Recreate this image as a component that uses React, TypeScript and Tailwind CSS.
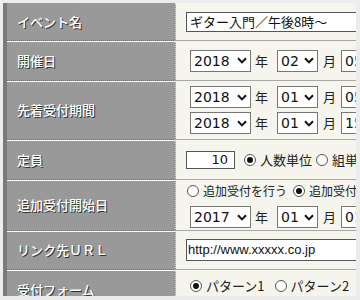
import React from 'react';

const jp = { fontFamily: '"Noto Sans CJK JP", "Noto Sans", sans-serif' };
const num = { fontFamily: '"DejaVu Sans", "Noto Sans CJK JP", sans-serif' };

const Chevron: React.FC = () => (
  <svg width="10" height="7" viewBox="0 0 10 7" className="ml-auto mr-[3px] shrink-0">
    <path d="M1 1.2 L5 5.4 L9 1.2" fill="none" stroke="#111" strokeWidth="2" />
  </svg>
);

const Select: React.FC<{ value: string; w: string }> = ({ value, w }) => (
  <div
    className={`flex h-[22px] ${w} shrink-0 items-center border border-[#767676] bg-white pl-[3px] text-[14px] leading-none text-[#111]`}
    style={num}
  >
    <span>{value}</span>
    <Chevron />
  </div>
);

const DateRow: React.FC<{ y: string; m: string; d: string }> = ({ y, m, d }) => (
  <div className="flex items-center text-[13px] text-[#222]" style={jp}>
    <Select value={y} w="w-[61px]" />
    <span className="ml-[4px] mr-[9px]">年</span>
    <Select value={m} w="w-[41px]" />
    <span className="ml-[5px] mr-[5px]">月</span>
    <Select value={d} w="w-[40px]" />
  </div>
);

const Radio: React.FC<{ checked?: boolean; label: string }> = ({ checked, label }) => (
  <span className="flex shrink-0 items-center">
    <span className="flex h-[12px] w-[12px] items-center justify-center rounded-full border border-[#555] bg-white">
      {checked && <span className="h-[6px] w-[6px] rounded-full bg-[#111]" />}
    </span>
    <span className="ml-[4px] whitespace-nowrap">{label}</span>
  </span>
);

const Row: React.FC<{ label: string; h: string; first?: boolean; children: React.ReactNode }> = ({
  label,
  h,
  first,
  children,
}) => (
  <div className={`flex ${h} shrink-0`}>
    <div
      className={`flex w-[169px] shrink-0 items-center border-b border-r border-b-[#6e6e6e] border-r-[#d8d8d8] border-dotted bg-[#999999] pl-[10px] text-[13px] font-medium text-white ${first ? '' : 'shadow-[inset_0_1px_0_#ffffff]'}`}
      style={{ ...jp, textShadow: '1px 1px 0 #333' }}
    >
      <span>{label}</span>
    </div>
    <div
      className="flex min-w-0 flex-1 items-center overflow-hidden border-b border-[#a8a8a8] bg-[#f5f5ee] pl-[10px] text-[13px] text-[#222]"
      style={jp}
    >
      {children}
    </div>
  </div>
);

export default function App() {
  return (
    <div className="h-[300px] w-[360px] overflow-hidden bg-[#ececec] pt-[3px] pl-[3px]">
      <div className="flex h-[293px] w-[353px] overflow-hidden">
        <div className="w-[4px] shrink-0 bg-[#7a7a7a]" />
        <div className="flex min-w-0 flex-1 flex-col">
          <Row label="イベント名" h="h-[38px]" first>
            <div className="flex h-[20px] w-[190px] shrink-0 items-center border border-[#555] bg-white pl-[3px] text-[13px] text-[#111]">
              ギター入門／午後8時～
            </div>
          </Row>
          <Row label="開催日" h="h-[40px]">
            <div className="pl-[4px]">
              <DateRow y="2018" m="02" d="05" />
            </div>
          </Row>
          <Row label="先着受付期間" h="h-[59px]">
            <div className="flex flex-col gap-[4px] pl-[4px]">
              <DateRow y="2018" m="01" d="05" />
              <DateRow y="2018" m="01" d="15" />
            </div>
          </Row>
          <Row label="定員" h="h-[40px]">
            <div className="flex items-center">
              <div
                className="flex h-[18px] w-[49px] shrink-0 items-center justify-end border border-[#555] bg-white pr-[6px] text-[13px] text-[#111]"
                style={num}
              >
                10
              </div>
              <span className="ml-[9px]">
                <Radio checked label="人数単位" />
              </span>
              <span className="ml-[4px]">
                <Radio label="組単位" />
              </span>
            </div>
          </Row>
          <Row label="追加受付開始日" h="h-[51px]">
            <div className="flex flex-col gap-[6px] pl-[1px]">
              <div className="flex items-center text-[12px]">
                <Radio label="追加受付を行う" />
                <span className="ml-[6px]">
                  <Radio checked label="追加受付を行わない" />
                </span>
              </div>
              <div className="pl-[3px]">
                <DateRow y="2017" m="01" d="01" />
              </div>
            </div>
          </Row>
          <Row label="リンク先ＵＲＬ" h="h-[39px]">
            <div
              className="flex h-[22px] w-[190px] shrink-0 items-center border border-[#555] bg-white pl-[1px] text-[13px] text-[#111]"
              style={{ fontFamily: '"Liberation Sans", Arial, sans-serif' }}
            >
              http://www.xxxxx.co.jp
            </div>
          </Row>
          <Row label="受付フォーム" h="h-[40px]">
            <div className="-mt-[8px] flex items-center pl-[4px]">
              <Radio checked label="パターン1" />
              <span className="ml-[10px]">
                <Radio label="パターン2" />
              </span>
            </div>
          </Row>
        </div>
      </div>
    </div>
  );
}
